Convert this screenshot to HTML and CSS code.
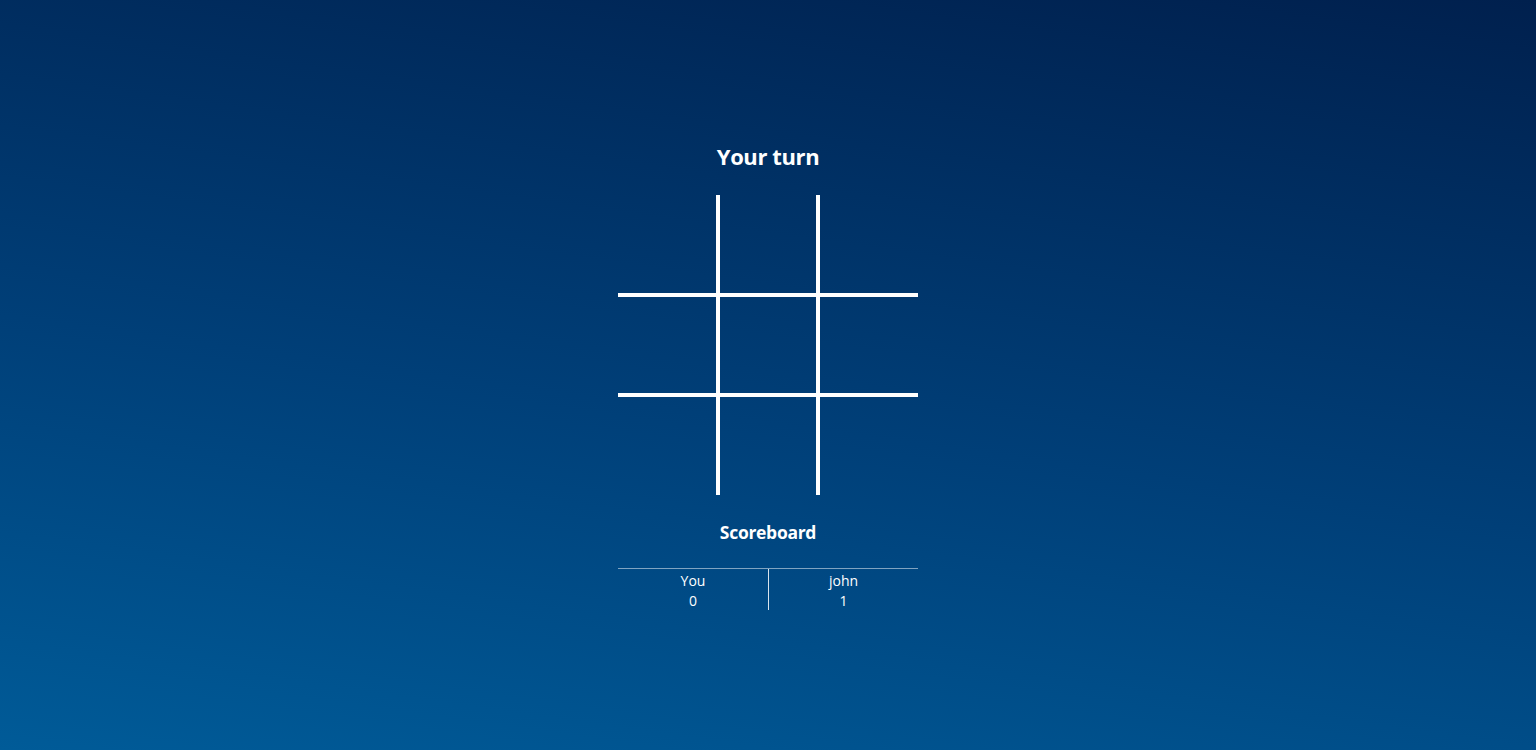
FILE: index.html
```html
<!DOCTYPE html>
<html lang="en">
<head>
<meta charset="utf-8">
<title>Tic Tac Toe</title>
<link rel="stylesheet" href="styles.css">
</head>
<body>
<main class="game">
  <h2 class="status">Your turn</h2>
  <div class="board">
    <div class="cell c-r c-b"></div>
    <div class="cell c-l c-r c-b"></div>
    <div class="cell c-l c-b"></div>
    <div class="cell c-t c-r c-b"></div>
    <div class="cell c-t c-l c-r c-b"></div>
    <div class="cell c-t c-l c-b"></div>
    <div class="cell c-t c-r"></div>
    <div class="cell c-t c-l c-r"></div>
    <div class="cell c-t c-l"></div>
  </div>
  <h3 class="score-title">Scoreboard</h3>
  <div class="score">
    <div class="player">
      <div class="name">You</div>
      <div class="points">0</div>
    </div>
    <div class="player player-right">
      <div class="name">john</div>
      <div class="points">1</div>
    </div>
  </div>
</main>
</body>
</html>
```

FILE: styles.css
```css
html, body {
  margin: 0;
  height: 100%;
}

body {
  background: linear-gradient(8deg, #005b98 0%, #003f78 45%, #00204e 100%);
  color: #ffffff;
  font-family: "Open Sans", "Noto Sans", sans-serif;
}

.game {
  width: 300px;
  margin: 0 auto;
  padding-top: 141px;
  text-align: center;
}

.status {
  margin: 0;
  font-size: 22px;
  line-height: 30px;
  font-weight: 700;
  letter-spacing: -0.4px;
}

.board {
  margin-top: 24px;
  display: grid;
  grid-template-columns: repeat(3, 100px);
  grid-template-rows: repeat(3, 100px);
}

.cell {
  box-sizing: border-box;
}

.c-t { border-top: 2px solid #ffffff; }
.c-b { border-bottom: 2px solid #ffffff; }
.c-l { border-left: 2px solid #ffffff; }
.c-r { border-right: 2px solid #ffffff; }

.score-title {
  margin: 25px 0 0;
  font-size: 17.5px;
  line-height: 24px;
  font-weight: 700;
  letter-spacing: -0.3px;
}

.score {
  margin-top: 24px;
  border-top: 1px solid rgba(255, 255, 255, 0.5);
  display: grid;
  grid-template-columns: 1fr 1fr;
}

.player {
  padding-top: 2px;
  font-size: 14px;
  line-height: 20px;
  height: 41px;
  box-sizing: border-box;
}

.player-right {
  border-left: 1px solid rgba(255, 255, 255, 0.85);
}
```
